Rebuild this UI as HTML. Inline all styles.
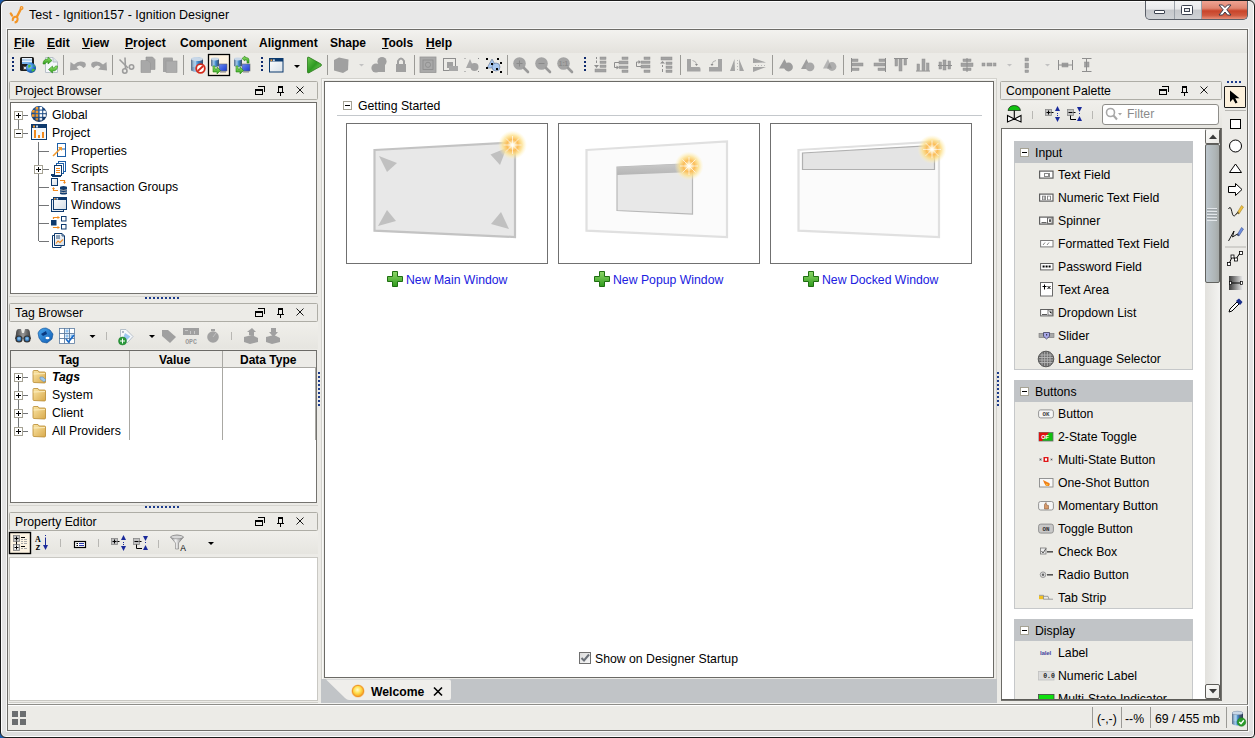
<!DOCTYPE html>
<html><head><meta charset="utf-8">
<style>
*{margin:0;padding:0;box-sizing:border-box}
html,body{width:1255px;height:738px;overflow:hidden;background:linear-gradient(90deg,#1d5aa8 0,#1d5aa8 50%,#d8d8d8 50%)}
body{font-family:"Liberation Sans",sans-serif;font-size:12.25px;color:#000;position:relative}
.a{position:absolute}
.t{position:absolute;white-space:nowrap;line-height:14px}
#win{position:absolute;left:0;top:0;width:1255px;height:738px;background:linear-gradient(#e8e8e8 0,#e8e8e8 28px,#e4e4e4 28px,#e4e4e4 730px,#dddddd 730px);border:1px solid #1a1a1a;border-radius:6px 6px 4px 6px;box-shadow:inset 1px 1px 0 #fdfdfd,inset -1px -1px 0 #fdfdfd}
#inner{position:absolute;left:7px;top:29px;width:1241px;height:702px;background:#ecebe7;border:1px solid #6e6d69;box-shadow:0 0 0 1px #f6f6f6}
.menu{position:absolute;top:36px;font-weight:bold;font-size:12px;line-height:14px;white-space:nowrap}
.menu u{text-decoration:underline;text-underline-offset:1px}
.sep{position:absolute;width:1px;background:#a4a39f}
.hdr{position:absolute;height:19px;background:#ecebe7;border:1px solid #aeada6;border-radius:1.5px}
.hdr .t{top:2px;left:5px}
.box{position:absolute;background:#fff;border:1px solid #6b6a66;border-right-color:#74736f;border-bottom-color:#74736f}
.exp{position:absolute;width:9px;height:9px;border:1px solid #a5a294;background:#fff}
.exp:before{content:"";position:absolute;left:1px;top:3px;width:5px;height:1px;background:#000}
.exp.p:after{content:"";position:absolute;left:3px;top:1px;width:1px;height:5px;background:#000}
.vl{position:absolute;width:1px;background:#737577}
.hl{position:absolute;height:1px;background:#737577}
.dots{position:absolute;height:2px;background:repeating-linear-gradient(90deg,#1d3c8c 0 2px,transparent 2px 4px)}
.vdots{position:absolute;width:2px;background:repeating-linear-gradient(180deg,#1d3c8c 0 2px,transparent 2px 4px)}
.link{position:absolute;top:273px;color:#2020e0;line-height:14px;white-space:nowrap}
.pal{position:absolute;left:1058px;line-height:14px;white-space:nowrap}
.cat{position:absolute;left:1014px;width:179px;height:22px;background:#c1c4c7}
.cat .t{left:21px;top:4px}
.cat .exp{left:6px;top:7px}
.grp{position:absolute;left:1014px;width:179px;background:#ecebe6;border:1px solid #c6c8ca;border-top:0}
svg{position:absolute;overflow:visible}
.hico{position:absolute;top:5px}
</style></head><body>
<div id="win"></div>

<!-- window controls -->
<div class="a" style="left:1145px;top:1px;width:103px;height:19px;border:1px solid #5a5f68;border-top:0;border-radius:0 0 5px 5px;overflow:hidden;background:#9aa0a8">
<div class="a" style="left:0;top:0;width:28px;height:18px;background:linear-gradient(#f4f4f5 0,#e8e9eb 45%,#c6c8cc 50%,#cfd2d6 100%)"></div>
<div class="a" style="left:29px;top:0;width:26px;height:18px;background:linear-gradient(#f4f4f5 0,#e8e9eb 45%,#c6c8cc 50%,#cfd2d6 100%)"></div>
<div class="a" style="left:56px;top:0;width:47px;height:18px;background:linear-gradient(#f0a493 0,#e08570 40%,#c9442a 55%,#d05a40 80%,#e8907a 100%)"></div>
</div>
<div class="a" style="left:1154px;top:10px;width:11px;height:4px;background:#fff;border:1px solid #3c4250;border-radius:1px"></div>
<div class="a" style="left:1181px;top:5px;width:12px;height:10px;border:1.5px solid #3c4250;border-radius:1.5px;background:#fff"></div>
<div class="a" style="left:1184px;top:8px;width:6px;height:4px;border:1px solid #3c4250;background:#e8e9eb"></div>
<svg style="left:1219px;top:5px" width="12" height="10" viewBox="0 0 12 10"><path d="M0 0 L3.5 0 L6 2.6 L8.5 0 L12 0 L7.8 4.8 L12 10 L8.5 10 L6 7 L3.5 10 L0 10 L4.2 4.8Z" fill="#fff" stroke="#3a3a48" stroke-width="1" stroke-linejoin="round"/></svg>
<!-- title icon -->
<svg style="left:9px;top:6px" width="16" height="18" viewBox="0 0 16 18"><path d="M12.5 1.8 L7.8 11" stroke="#f39526" stroke-width="2.4" stroke-linecap="round"/><circle cx="12.6" cy="2" r="1.9" fill="#f39526"/><circle cx="12.6" cy="1.8" r="0.6" fill="#fbe0c0"/><path d="M3.8 15 Q3.3 11.5 6 10.8 Q9 10.5 8.6 13.5 Q8.2 16.2 5.6 16.6" fill="none" stroke="#f39526" stroke-width="2"/><path d="M1.8 7.5 L3 9.5" stroke="#f39526" stroke-width="2.4" stroke-linecap="round"/></svg>
<!-- title -->
<div class="t" style="left:29px;top:7px;font-size:12.5px;line-height:16px">Test - Ignition157 - Ignition Designer</div>
<div id="inner"></div>
<!-- menu bar -->
<div class="a" style="left:8px;top:30px;width:1239px;height:23px;background:linear-gradient(#f3f2ef,#e4e2dd)"></div>
<div class="menu" style="left:14px"><u>F</u>ile</div>
<div class="menu" style="left:47px"><u>E</u>dit</div>
<div class="menu" style="left:82px"><u>V</u>iew</div>
<div class="menu" style="left:125px"><u>P</u>roject</div>
<div class="menu" style="left:180px">Component</div>
<div class="menu" style="left:259px">Alignment</div>
<div class="menu" style="left:330px">Shape</div>
<div class="menu" style="left:382px"><u>T</u>ools</div>
<div class="menu" style="left:426px"><u>H</u>elp</div>
<!-- toolbar -->
<svg style="left:0;top:0" width="1255" height="82" viewBox="0 0 1255 82">
<defs>
<radialGradient id="glb" cx="0.35" cy="0.35" r="0.7"><stop offset="0" stop-color="#8fd0ff"/><stop offset="0.6" stop-color="#2a78d0"/><stop offset="1" stop-color="#124a9a"/></radialGradient>
<linearGradient id="grn" x1="0" y1="0" x2="0" y2="1"><stop offset="0" stop-color="#9be870"/><stop offset="1" stop-color="#2e9c1a"/></linearGradient>
<linearGradient id="play" x1="0" y1="0" x2="1" y2="1"><stop offset="0" stop-color="#6cc850"/><stop offset="0.5" stop-color="#2e9a22"/><stop offset="1" stop-color="#8ee070"/></linearGradient>
<linearGradient id="cyl" x1="0" y1="0" x2="1" y2="0"><stop offset="0" stop-color="#5a6e88"/><stop offset="0.35" stop-color="#9ec8ec"/><stop offset="0.6" stop-color="#3c86c8"/><stop offset="1" stop-color="#3a4a66"/></linearGradient>
<linearGradient id="mon" x1="0" y1="0" x2="1" y2="1"><stop offset="0" stop-color="#6c8cf0"/><stop offset="1" stop-color="#1a3ad0"/></linearGradient>
<linearGradient id="winb" x1="0" y1="0" x2="1" y2="1"><stop offset="0" stop-color="#ffffff"/><stop offset="1" stop-color="#d8e0e8"/></linearGradient>
</defs>
<!-- separators -->
<g fill="#9b9a96">
<rect x="63" y="55" width="1" height="20"/><rect x="112" y="55" width="1" height="20"/><rect x="183" y="55" width="1" height="20"/>
<rect x="327" y="55" width="1" height="20"/><rect x="414" y="55" width="1" height="20"/><rect x="507" y="55" width="1" height="20"/>
<rect x="680" y="55" width="1" height="20"/><rect x="772" y="55" width="1" height="20"/><rect x="843" y="55" width="1" height="20"/>
</g>
<!-- grips -->
<g fill="#0e2a6e">
<rect x="12" y="57" width="2" height="2"/><rect x="12" y="61" width="2" height="2"/><rect x="12" y="65" width="2" height="2"/><rect x="12" y="69" width="2" height="2"/>
<rect x="261" y="57" width="2" height="2"/><rect x="261" y="61" width="2" height="2"/><rect x="261" y="65" width="2" height="2"/><rect x="261" y="69" width="2" height="2"/>
<rect x="584" y="57" width="2" height="2"/><rect x="584" y="61" width="2" height="2"/><rect x="584" y="65" width="2" height="2"/><rect x="584" y="69" width="2" height="2"/>
</g>
<!-- save -->
<rect x="20" y="57" width="14" height="14" rx="1.5" fill="#1e1e1e"/>
<rect x="22" y="58" width="10" height="6" fill="#e8f2fb"/><rect x="22" y="59" width="10" height="2" fill="#b8d4ee"/><rect x="22" y="62" width="10" height="2" fill="#78b4ea"/>
<rect x="23" y="66" width="6" height="4" fill="#505050"/><rect x="24" y="67" width="2" height="2" fill="#ddd"/>
<circle cx="31" cy="68" r="5" fill="url(#glb)"/>
<path d="M28 65.5 Q30 64 31 66 Q30 68 28.5 68 Z M32 69 Q34 68 35 70 Q33 72 31.5 71.5Z M33 64.5 Q35 65 35.5 67 L34 66.5Z" fill="#4cbb3a"/>
<!-- refresh -->
<path d="M45.5 57.5 L53 57.5 L57.5 62 L57.5 72.5 L45.5 72.5Z" fill="#f4f7fa" stroke="#b8c0c8"/>
<path d="M53 57.5 L53 62 L57.5 62" fill="#dde3ea" stroke="#b8c0c8"/>
<path d="M43 64 Q43 59 48 59 L48 57 L52 60.5 L48 64 L48 62 Q45.5 62 45 64Z" fill="url(#grn)" stroke="#2a8a1a" stroke-width="0.6"/>
<path d="M57.5 66 Q57.5 71 52.5 71 L52.5 73 L48.5 69.5 L52.5 66 L52.5 68 Q55 68 55.5 66Z" fill="url(#grn)" stroke="#2a8a1a" stroke-width="0.6"/>
<!-- undo/redo -->
<path d="M70 70.5 L70.5 62 L74 64.5 Q79 59.5 85 62.5 Q86.5 64 85.5 66.5 L83.5 68 Q80 63.5 76.5 67 L79 69.5Z" fill="#a2a2a2"/>
<path d="M107 70.5 L106.5 62 L103 64.5 Q98 59.5 92 62.5 Q90.5 64 91.5 66.5 L93.5 68 Q97 63.5 100.5 67 L98 69.5Z" fill="#a2a2a2"/>
<!-- cut -->
<g stroke="#9c9c9c" fill="none" stroke-width="1.6"><path d="M119.5 59.5 L128 68"/><path d="M125 57.5 L125.5 69"/><circle cx="124.8" cy="71" r="2.2"/><circle cx="131.5" cy="67" r="2.2"/></g>
<!-- copy -->
<path d="M146 57 L152.5 57 L155 59.5 L155 69.5 L146 69.5Z" fill="#a4a4a4" stroke="#959595" stroke-width="0.6"/>
<path d="M141 60.5 L148 60.5 L150.5 63 L150.5 72.5 L141 72.5Z" fill="#a8a8a8" stroke="#959595" stroke-width="0.6"/>
<!-- paste -->
<path d="M163 58.5 Q163 57.5 164 57.5 L172 57.5 Q173 57.5 173 58.5 L173 72 L163 72Z" fill="#a4a4a4"/>
<rect x="166" y="61" width="11" height="11.5" fill="#acacac" stroke="#989898" stroke-width="0.6"/>
<!-- db no -->
<path d="M191 59 Q197 55.5 203 59 L203 70.5 Q197 74 191 70.5Z" fill="url(#cyl)"/>
<ellipse cx="197" cy="59" rx="6" ry="2" fill="#c9d8e8"/>
<g stroke="#d0e8f8" stroke-width="0.7"><line x1="192.5" y1="62" x2="196" y2="62"/><line x1="192.5" y1="64" x2="196" y2="64"/><line x1="192.5" y1="66" x2="196" y2="66"/></g>
<circle cx="200.5" cy="68.5" r="4.3" fill="#fff" stroke="#d42a1a" stroke-width="1.8"/>
<line x1="197.8" y1="71" x2="203.2" y2="66" stroke="#d42a1a" stroke-width="1.8"/>
<!-- selected button -->
<rect x="208.5" y="54.5" width="21" height="21" fill="#fdf3e2" stroke="#000" stroke-width="1.3"/>
<path d="M211 59 Q215 57 219 59 L219 66 Q215 68 211 66Z" fill="url(#cyl)"/>
<ellipse cx="215" cy="59" rx="4" ry="1.4" fill="#c9d8e8"/>
<rect x="219" y="64" width="8" height="7" fill="url(#mon)" stroke="#6a6a6a" stroke-width="0.6"/><rect x="220" y="71" width="6" height="1.6" fill="#9a9a9a"/>
<path d="M213 66 L215 66 L215 69 L217 69 L217 67 L220.5 70.5 L217 74 L217 72 L213 72Z" fill="url(#grn)" stroke="#2a8a1a" stroke-width="0.6"/>
<!-- db sync -->
<path d="M234 59 Q238 57 242 59 L242 66 Q238 68 234 66Z" fill="url(#cyl)"/>
<ellipse cx="238" cy="59" rx="4" ry="1.4" fill="#c9d8e8"/>
<rect x="242" y="64" width="8" height="7" fill="url(#mon)" stroke="#6a6a6a" stroke-width="0.6"/><rect x="243" y="71" width="6" height="1.6" fill="#9a9a9a"/>
<path d="M236 66 L238 66 L238 69 L240 69 L240 67 L243.5 70.5 L240 74 L240 72 L236 72Z" fill="url(#grn)" stroke="#2a8a1a" stroke-width="0.6"/>
<path d="M249 63 L249 60 Q249 57.5 246 57.5 L245 57.5 L245 56 L242 58.5 L245 61 L245 59.5 Q247 59.5 247 61 L247 63Z" fill="url(#grn)" stroke="#2a8a1a" stroke-width="0.6"/>
<!-- window -->
<rect x="269.5" y="58.5" width="13.5" height="13.5" fill="url(#winb)" stroke="#0c3a6e"/>
<rect x="270" y="59" width="13" height="2.5" fill="#0c3a6e"/>
<rect x="270.5" y="59.4" width="1.8" height="1.8" fill="#f0a040"/><rect x="273" y="59.4" width="1.8" height="1.8" fill="#c8d8ea"/>
<path d="M294 65 L300 65 L297 68Z" fill="#000"/>
<!-- play -->
<path d="M307.5 58 Q307.5 56.5 309 57.3 L321 64 Q322 65 321 66 L309 72.8 Q307.5 73.5 307.5 72Z" fill="url(#play)" stroke="#2a7a1a" stroke-width="0.8"/>
<!-- gray group 1 -->
<g fill="#a0a0a0">
<path d="M334 60 L339 57.5 L348.5 59.5 L348 70 L343 73 L334 70.5Z"/>
<path d="M359 64 L364 64 L361.5 66.5Z" fill="#c2c2c2"/>
<circle cx="376" cy="68" r="4.6"/><circle cx="382" cy="61.5" r="4.6"/><rect x="377" y="64" width="8" height="8"/>
<path d="M396 64 L406 64 L406 72 L396 72Z"/><path d="M398 64 L398 61 Q401 56 404 61 L404 64" fill="none" stroke="#a0a0a0" stroke-width="2"/>
<rect x="420" y="57" width="16" height="15.5" fill="#a9a9a9" stroke="#969696" stroke-width="0.8"/>
</g>
<g stroke="#8c8c8c" fill="none" stroke-width="0.8"><rect x="423" y="60" width="10" height="9.5"/><circle cx="428" cy="64.8" r="2.6"/></g>
<g fill="none" stroke="#8e8e8e" stroke-width="1"><rect x="443.5" y="58.5" width="12" height="12"/></g>
<rect x="447" y="62" width="6" height="6" fill="#a0a0a0"/><rect x="449" y="66" width="9" height="5" fill="#a8a8a8"/>
<path d="M466 68 L470 59 L474 68Z" fill="#a8a8a8"/><circle cx="474.5" cy="67" r="4" fill="#a2a2a2"/>
<g fill="#888"><rect x="464.5" y="58" width="1" height="1"/><rect x="478" y="58" width="1" height="1"/><rect x="464.5" y="71" width="1" height="1"/><rect x="478" y="71" width="1" height="1"/></g>
<path d="M487 68 L492 59 L497 68Z" fill="#a8c8f0" stroke="#506080" stroke-width="0.5"/><circle cx="496" cy="67" r="4" fill="#a8c8f0" stroke="#506080" stroke-width="0.5"/>
<g fill="#000"><rect x="486" y="58" width="2" height="2"/><rect x="497" y="58" width="2" height="2"/><rect x="500" y="62" width="2" height="2"/><rect x="486" y="67" width="2" height="2"/><rect x="491" y="63" width="2" height="2"/><rect x="496" y="68" width="2" height="2"/><rect x="491" y="71" width="2" height="2"/><rect x="500" y="71" width="2" height="2"/></g>
<!-- zoom -->
<g fill="#a4a4a4"><circle cx="519.5" cy="63.5" r="6.3"/><circle cx="541.5" cy="63.5" r="6.3"/><circle cx="563.5" cy="63.5" r="6.3"/></g>
<g stroke="#9a9a9a" stroke-width="2.6" stroke-linecap="round"><line x1="524" y1="68" x2="528" y2="72"/><line x1="546" y1="68" x2="550" y2="72"/><line x1="568" y1="68" x2="572" y2="72"/></g>
<g stroke="#8a8a8a" stroke-width="1"><path d="M516.5 63.5 L522.5 63.5 M519.5 60.5 L519.5 66.5"/><path d="M538.5 63.5 L544.5 63.5"/></g>
<text x="563.5" y="66.2" font-size="6.5" font-weight="bold" text-anchor="middle" fill="#8a8a8a" font-family="Liberation Sans">1:1</text>
<!-- list icons -->
<g fill="#a2a2a2" stroke="#8e8e8e" stroke-width="0.5">
<rect x="600" y="57" width="6" height="2.4"/><rect x="600" y="61" width="6" height="2.4"/><rect x="600" y="65" width="6" height="2.4"/><rect x="595" y="69" width="11" height="3"/>
<rect x="622" y="57" width="6" height="2.4"/><rect x="619" y="61" width="9" height="3"/><rect x="619" y="66" width="9" height="2.4"/><rect x="622" y="70" width="6" height="2.4"/>
<rect x="644" y="57" width="6" height="2.4"/><rect x="641" y="61" width="9" height="2.4"/><rect x="641" y="65" width="9" height="3"/><rect x="644" y="70" width="6" height="2.4"/>
<rect x="661" y="57" width="11" height="3"/><rect x="666" y="62" width="6" height="2.4"/><rect x="666" y="66" width="6" height="2.4"/><rect x="666" y="70" width="6" height="2.4"/>
</g>
<g stroke="#8e8e8e" fill="none" stroke-width="1">
<path d="M596.5 57 L596.5 59 M596.5 60.5 L596.5 63"/><path d="M619 62.5 L614.5 62.5 L614.5 67.5 L617.5 67.5"/><path d="M641 66.5 L636.5 66.5 L636.5 62 L639 62"/><path d="M662.5 65 L662.5 67 M662.5 69 L662.5 72"/>
</g>
<g fill="#8e8e8e"><path d="M594 65 L599 65 L596.5 68Z"/><path d="M616.5 65.5 L619 67.5 L616.5 69.5Z"/><path d="M638.5 60 L641 62 L638.5 64Z"/><path d="M660 63.5 L665 63.5 L662.5 61Z"/></g>
<!-- rotate / flip -->
<g fill="#a4a4a4">
<path d="M687 59 L691 59 L691 67 L699 67 Q700.5 67 700.5 69 L700.5 71.5 L687 71.5Z"/>
<path d="M722 59 L718 59 L718 67 L709 67 L709 71.5 L722 71.5Z"/>
<path d="M730 71 L734.5 59 L735 71Z"/><path d="M739 59 L739.5 71 L744 71Z"/>
<path d="M753 58 L766 62.5 L753 63Z"/><path d="M753 67 L766 67 L753 72Z"/>
</g>
<g fill="none" stroke="#9a9a9a" stroke-width="0.7"><path d="M692.5 60.5 Q696 61 696.5 64"/><path d="M716 60.5 Q712.5 61 712 64"/></g>
<g fill="#888"><path d="M695 64 L698 64 L696.5 66Z"/><path d="M710.5 64 L713.5 64 L712 66Z"/></g>
<g fill="#b8b8b8"><rect x="737" y="60" width="1" height="1"/><rect x="737" y="63" width="1" height="1"/><rect x="737" y="66" width="1" height="1"/><rect x="737" y="69" width="1" height="1"/><rect x="755" y="65" width="1" height="1"/><rect x="758" y="65" width="1" height="1"/><rect x="761" y="65" width="1" height="1"/><rect x="764" y="65" width="1" height="1"/></g>
<!-- boolean shapes -->
<g fill="#9c9c9c"><path d="M779 68.5 L784.5 59 L788 66 L788 68.5Z"/><circle cx="788.5" cy="67" r="4.4"/></g>
<g fill="#9e9e9e"><path d="M801 69 L806.5 59 L811 69Z"/></g><circle cx="810" cy="66.8" r="4.4" fill="#a8a8a8"/>
<g fill="#a6a6a6" opacity="0.9"><path d="M823 68.5 L828 59 L832 68.5Z" fill="#b0b0b0"/><circle cx="832" cy="66.5" r="4.4" fill="#a8a8a8"/><path d="M827 68.5 L829.5 63 L832 68.5Z" fill="#909090"/></g>
<!-- align -->
<g fill="#a2a2a2" stroke="#8e8e8e" stroke-width="0.5">
<rect x="852" y="59" width="6" height="2.5"/><rect x="852" y="63" width="11" height="3"/><rect x="852" y="68" width="7" height="2.5"/>
<rect x="879" y="59" width="6" height="2.5"/><rect x="874" y="63" width="11" height="3"/><rect x="878" y="68" width="7" height="2.5"/>
<rect x="895" y="59" width="2.5" height="7"/><rect x="899" y="59" width="3" height="12"/><rect x="904" y="59" width="2.5" height="6"/>
<rect x="917" y="64" width="2.5" height="6.5"/><rect x="922" y="59" width="3" height="11.5"/><rect x="926.5" y="63" width="2.5" height="7.5"/>
<rect x="939" y="62" width="2.5" height="7"/><rect x="943" y="60" width="3" height="10"/><rect x="948" y="61" width="2.5" height="8"/>
<rect x="963" y="59" width="8" height="2.5"/><rect x="961" y="63" width="12" height="3.5"/><rect x="963" y="68" width="8" height="2.5"/>
<rect x="982" y="63" width="3" height="3"/><rect x="987" y="63" width="5" height="3"/><rect x="993.5" y="63" width="2.5" height="3"/>
<rect x="1025" y="58" width="3.5" height="3"/><rect x="1025" y="63" width="3.5" height="5"/><rect x="1025" y="70" width="3.5" height="2.5"/>
<rect x="1062" y="63" width="6" height="4"/><rect x="1084.5" y="62" width="4.5" height="5"/>
</g>
<g stroke="#8e8e8e" stroke-width="1">
<path d="M851.5 58 L851.5 72"/><path d="M885.5 58 L885.5 72"/><path d="M894 58.5 L908 58.5"/><path d="M916 71 L930 71"/><path d="M938 65.5 L952 65.5"/><path d="M967 58 L967 72"/>
<path d="M1058.5 60 L1058.5 70 M1072.5 60 L1072.5 70 M1059 65 L1072 65"/><path d="M1082 58.5 L1091.5 58.5 M1082 71.5 L1091.5 71.5 M1086.5 59 L1086.5 71"/>
</g>
<g fill="#c2c2c2"><path d="M1007 64 L1012 64 L1009.5 66.5Z"/><path d="M1045 64 L1050 64 L1047.5 66.5Z"/></g>
</svg>


<!-- LEFT: project browser -->
<div class="hdr" style="left:9px;top:81px;width:309px"><div class="t">Project Browser</div></div>
<div class="box" style="left:10px;top:102px;width:307px;height:192px"></div>

<!-- project tree -->
<div class="exp p" style="left:14px;top:111px"></div>
<div class="hl" style="left:23px;top:115px;width:5px"></div>
<div class="vl" style="left:18px;top:120px;height:9px"></div>
<div class="exp" style="left:14px;top:129px"></div>
<div class="hl" style="left:23px;top:133px;width:5px"></div>
<div class="vl" style="left:38px;top:142px;height:99px"></div>
<div class="hl" style="left:39px;top:151px;width:10px"></div>
<div class="exp p" style="left:34px;top:165px"></div>
<div class="hl" style="left:43px;top:169px;width:6px"></div>
<div class="hl" style="left:39px;top:187px;width:10px"></div>
<div class="hl" style="left:39px;top:205px;width:10px"></div>
<div class="hl" style="left:39px;top:223px;width:10px"></div>
<div class="hl" style="left:39px;top:241px;width:10px"></div>
<svg style="left:31px;top:106px" width="16" height="16" viewBox="0 0 16 16"><defs><clipPath id="gc"><circle cx="8" cy="8" r="7.6"/></clipPath><radialGradient id="gg" cx="0.4" cy="0.35" r="0.75"><stop offset="0" stop-color="#2a68b0"/><stop offset="1" stop-color="#0a2a58"/></radialGradient></defs><circle cx="8" cy="8" r="7.9" fill="url(#gg)"/><g clip-path="url(#gc)"><g fill="#f39a2c"><rect x="1" y="4" width="2.6" height="2.6"/><rect x="4.6" y="1" width="2.6" height="2.6"/><rect x="4.6" y="4.6" width="2.6" height="2.6"/><rect x="1" y="8.2" width="2.6" height="2.6"/><rect x="4.6" y="8.2" width="2.6" height="2.6"/><rect x="4.6" y="11.8" width="2.6" height="2.6" opacity="0.8"/></g><g fill="#fff"><rect x="8.6" y="1" width="2.6" height="2.6"/><rect x="8.6" y="4.6" width="2.6" height="2.6"/><rect x="12.2" y="4.6" width="2.6" height="2.6"/><rect x="8.6" y="8.2" width="2.6" height="2.6"/><rect x="12.2" y="8.2" width="2.6" height="2.6"/><rect x="8.6" y="11.8" width="2.6" height="2.6" opacity="0.85"/></g></g></svg>
<div class="t" style="left:52px;top:108px">Global</div>
<svg style="left:31px;top:124px" width="16" height="16" viewBox="0 0 16 16"><rect x="0.5" y="0.5" width="15" height="15" fill="#f4f8fc" stroke="#0e3a6e"/><rect x="1" y="1" width="14" height="3" fill="#0e3a6e"/><rect x="2" y="1.5" width="2" height="2" fill="#f39a2c"/><rect x="5" y="1.5" width="2" height="2" fill="#c8d8ea"/><rect x="3" y="6" width="2" height="8" fill="#f28a1e"/><rect x="7" y="11" width="2" height="3" fill="#f28a1e"/><rect x="11" y="8" width="2" height="6" fill="#f28a1e"/></svg>
<div class="t" style="left:52px;top:126px">Project</div>
<svg style="left:51px;top:143px" width="16" height="16" viewBox="0 0 16 16"><rect x="6.5" y="0.5" width="8" height="13" fill="#fff" stroke="#1c5fa8"/><line x1="8" y1="6" x2="14" y2="6" stroke="#1c5fa8"/><path d="M2 13 L10 5" stroke="#f39a2c" stroke-width="1.6"/><path d="M7 4 L11 4 L11 8 Z" fill="#f39a2c"/></svg>
<div class="t" style="left:71px;top:144px">Properties</div>
<svg style="left:51px;top:160px" width="16" height="17" viewBox="0 0 16 17" shape-rendering="crispEdges"><rect x="7.5" y="1.5" width="7" height="10" fill="#fff" stroke="#1c5fa8"/><rect x="5.5" y="3.5" width="7" height="10" fill="#fff" stroke="#1c5fa8"/><rect x="3.5" y="5.5" width="7" height="10" fill="#fff" stroke="#0e3a6e"/><g fill="#f28a1e"><rect x="5" y="8" width="4" height="1"/><rect x="5" y="10" width="4" height="1"/><rect x="5" y="12" width="4" height="1"/></g><path d="M0 14 L3 14 L3 15 L10 15 L10 17 L1 17 L0 16Z" fill="#0e3a6e"/></svg>
<div class="t" style="left:71px;top:162px">Scripts</div>
<svg style="left:0;top:0" width="80" height="260" viewBox="0 0 80 260">
<defs><linearGradient id="wg" x1="0" y1="0" x2="1" y2="1"><stop offset="0" stop-color="#ffffff"/><stop offset="1" stop-color="#d4dde6"/></linearGradient></defs>
<rect x="51.5" y="178.5" width="6" height="7" fill="url(#wg)" stroke="#0e3a6e"/>
<path d="M60 180.5 L64.5 180.5 L64.5 182.5" fill="none" stroke="#f28a1e" stroke-width="1.2"/><path d="M63 182 L66 182 L64.5 184Z" fill="#f28a1e"/>
<path d="M58 190.5 L53.5 190.5 L53.5 188.5" fill="none" stroke="#f28a1e" stroke-width="1.2"/><path d="M52 189 L55 189 L53.5 187Z" fill="#f28a1e"/>
<g fill="#0e3a6e"><ellipse cx="63.5" cy="187.5" rx="3.5" ry="1.5"/><rect x="60" y="187.5" width="7" height="6"/><ellipse cx="63.5" cy="193.5" rx="3.5" ry="1"/></g>
<g stroke="#fff" stroke-width="0.7"><path d="M60 189.8 Q63.5 191 67 189.8"/><path d="M60 192 Q63.5 193.2 67 192"/></g>
<rect x="51.5" y="199.5" width="12" height="12" fill="#e8eef4" stroke="#0e3a6e"/>
<rect x="53.5" y="197.5" width="13" height="12" fill="url(#wg)" stroke="#0e3a6e"/>
<rect x="53" y="197" width="14" height="3" fill="#0e3a6e"/>
<rect x="54" y="198" width="1.6" height="1.6" fill="#e89a40"/><rect x="56.5" y="198" width="1.6" height="1.6" fill="#c8d8ea"/>
<rect x="51" y="220" width="5.5" height="5.5" fill="#0e3a6e"/>
<rect x="61.5" y="216.5" width="4.5" height="4.5" fill="#fff" stroke="#0e3a6e"/>
<rect x="61.5" y="224.5" width="4.5" height="4.5" fill="#fff" stroke="#0e3a6e"/>
<path d="M53.5 219 L53.5 217.5 L58 217.5" fill="none" stroke="#f28a1e" stroke-width="1.2"/><path d="M57.5 216 L60 217.5 L57.5 219Z" fill="#f28a1e"/>
<path d="M53.5 227 L53.5 227.5 L58 227.5" fill="none" stroke="#f28a1e" stroke-width="1.2"/><path d="M57.5 226 L60 227.5 L57.5 229Z" fill="#f28a1e"/>
<path d="M52.5 235.5 L61 235.5 L61 247.5 L52.5 247.5Z" fill="#fff" stroke="#0e3a6e"/>
<path d="M54.5 233.5 L62 233.5 L64.5 236 L64.5 245.5 L54.5 245.5Z" fill="url(#wg)" stroke="#0e3a6e"/>
<path d="M62 233.5 L62 236 L64.5 236" fill="none" stroke="#0e3a6e" stroke-width="0.8"/>
<g stroke="#0e3a6e" stroke-width="0.9"><path d="M56 236 L60 236"/><path d="M56 238 L60 238"/></g>
<path d="M56 243.5 L58 241 L60 242.5 L63 239.5" fill="none" stroke="#f28a1e" stroke-width="1.1"/>
</svg>
<div class="t" style="left:71px;top:180px">Transaction Groups</div>
<div class="t" style="left:71px;top:198px">Windows</div>
<div class="t" style="left:71px;top:216px">Templates</div>
<div class="t" style="left:71px;top:234px">Reports</div>
<div class="a" style="left:9px;top:296px;width:309px;height:1px;background:#d6d5d0"></div>
<div class="dots" style="left:145px;top:297px;width:35px"></div>

<!-- tag browser -->
<div class="hdr" style="left:9px;top:303px;width:309px"><div class="t">Tag Browser</div></div>
<div class="a" style="left:9px;top:322px;width:309px;height:27px;background:linear-gradient(#f0efeb,#e6e5e0)"></div>
<div class="box" style="left:10px;top:350px;width:307px;height:153px"></div>
<div class="a" style="left:11px;top:351px;width:305px;height:17px;background:#ecebe7;border-bottom:1px solid #a9a8a3"></div>
<div class="vl" style="left:129px;top:351px;height:89px;background:#a9a8a3"></div>
<div class="vl" style="left:222px;top:351px;height:89px;background:#a9a8a3"></div>
<div class="vl" style="left:315px;top:368px;height:72px;background:#a9a8a3"></div>
<div class="t" style="left:59px;top:353px;font-weight:bold;font-size:12px">Tag</div>
<div class="t" style="left:159px;top:353px;font-weight:bold;font-size:12px">Value</div>
<div class="t" style="left:240px;top:353px;font-weight:bold;font-size:12px">Data Type</div>

<!-- tag tree -->
<div class="vl" style="left:18px;top:382px;height:46px"></div>
<div class="exp p" style="left:14px;top:373px"></div><div class="hl" style="left:23px;top:377px;width:5px"></div>
<svg style="left:32px;top:369px" width="15" height="15" viewBox="0 0 15 15"><defs><linearGradient id="fg377" x1="0" y1="0" x2="1" y2="1"><stop offset="0" stop-color="#fbe7a8"/><stop offset="1" stop-color="#d9a94a"/></linearGradient></defs><path d="M1 2.5 Q1 1.5 2 1.5 L6 1.5 L7 3 L12.5 3 Q13.5 3 13.5 4 L13.5 13 Q13.5 14 12.5 14 L2 13.5 Q1 13.5 1 12.5Z" fill="url(#fg377)" stroke="#b8892f" stroke-width="0.8"/><path d="M1.5 5 L13 4.5" stroke="#fff4cc" stroke-width="0.8"/><path d="M8 8 L11 8 L14 11 L12 13 L8 10Z" fill="#9cc8ef" stroke="#6a8fb0" stroke-width="0.6"/></svg>
<div class="t" style="left:52px;top:370px;font-weight:bold;font-style:italic;">Tags</div>
<div class="exp p" style="left:14px;top:391px"></div><div class="hl" style="left:23px;top:395px;width:5px"></div>
<svg style="left:32px;top:387px" width="15" height="15" viewBox="0 0 15 15"><defs><linearGradient id="fg395" x1="0" y1="0" x2="1" y2="1"><stop offset="0" stop-color="#fbe7a8"/><stop offset="1" stop-color="#d9a94a"/></linearGradient></defs><path d="M1 2.5 Q1 1.5 2 1.5 L6 1.5 L7 3 L12.5 3 Q13.5 3 13.5 4 L13.5 13 Q13.5 14 12.5 14 L2 13.5 Q1 13.5 1 12.5Z" fill="url(#fg395)" stroke="#b8892f" stroke-width="0.8"/><path d="M1.5 5 L13 4.5" stroke="#fff4cc" stroke-width="0.8"/></svg>
<div class="t" style="left:52px;top:388px;">System</div>
<div class="exp p" style="left:14px;top:409px"></div><div class="hl" style="left:23px;top:413px;width:5px"></div>
<svg style="left:32px;top:405px" width="15" height="15" viewBox="0 0 15 15"><defs><linearGradient id="fg413" x1="0" y1="0" x2="1" y2="1"><stop offset="0" stop-color="#fbe7a8"/><stop offset="1" stop-color="#d9a94a"/></linearGradient></defs><path d="M1 2.5 Q1 1.5 2 1.5 L6 1.5 L7 3 L12.5 3 Q13.5 3 13.5 4 L13.5 13 Q13.5 14 12.5 14 L2 13.5 Q1 13.5 1 12.5Z" fill="url(#fg413)" stroke="#b8892f" stroke-width="0.8"/><path d="M1.5 5 L13 4.5" stroke="#fff4cc" stroke-width="0.8"/></svg>
<div class="t" style="left:52px;top:406px;">Client</div>
<div class="exp p" style="left:14px;top:427px"></div><div class="hl" style="left:23px;top:431px;width:5px"></div>
<svg style="left:32px;top:423px" width="15" height="15" viewBox="0 0 15 15"><defs><linearGradient id="fg431" x1="0" y1="0" x2="1" y2="1"><stop offset="0" stop-color="#fbe7a8"/><stop offset="1" stop-color="#d9a94a"/></linearGradient></defs><path d="M1 2.5 Q1 1.5 2 1.5 L6 1.5 L7 3 L12.5 3 Q13.5 3 13.5 4 L13.5 13 Q13.5 14 12.5 14 L2 13.5 Q1 13.5 1 12.5Z" fill="url(#fg431)" stroke="#b8892f" stroke-width="0.8"/><path d="M1.5 5 L13 4.5" stroke="#fff4cc" stroke-width="0.8"/></svg>
<div class="t" style="left:52px;top:424px;">All Providers</div>
<div class="a" style="left:9px;top:505px;width:309px;height:1px;background:#d6d5d0"></div>
<div class="dots" style="left:145px;top:506px;width:35px"></div>

<!-- property editor -->
<div class="hdr" style="left:9px;top:512px;width:309px"><div class="t">Property Editor</div></div>
<div class="a" style="left:9px;top:531px;width:309px;height:23px;background:linear-gradient(#f0efeb,#e6e5e0)"></div>
<div class="a" style="left:9px;top:557px;width:309px;height:144px;background:#fff;border:1px solid #c9c8c3"></div>
<div class="a" style="left:9px;top:702px;width:309px;height:1px;background:#d0cfca"></div>

<!-- center -->
<div class="a" style="left:321px;top:78px;width:676px;height:626px;border:1px solid #d3d2cd;border-bottom:0;box-shadow:inset 1px 1px 0 #f8f8f6"></div>
<div class="box" style="left:324px;top:81px;width:670px;height:597px;border-color:#6b6a66"></div>
<div class="exp" style="left:343px;top:101px"></div>
<div class="t" style="left:358px;top:99px">Getting Started</div>
<div class="a" style="left:337px;top:115px;width:645px;height:1px;background:#c4c8cc"></div>
<div class="a" style="left:346px;top:123px;width:202px;height:141px;border:1px solid #707070"></div>
<div class="a" style="left:558px;top:123px;width:202px;height:141px;border:1px solid #707070"></div>
<div class="a" style="left:770px;top:123px;width:202px;height:141px;border:1px solid #707070"></div>

<!-- card drawings -->
<svg style="left:0;top:0" width="1" height="1"><defs>
<radialGradient id="sun"><stop offset="0" stop-color="#ffffff"/><stop offset="0.12" stop-color="#fff2cc"/><stop offset="0.38" stop-color="#fbbc58"/><stop offset="0.66" stop-color="#fde08c" stop-opacity="0.8"/><stop offset="1" stop-color="#fff4c0" stop-opacity="0"/></radialGradient>
</defs></svg>
<svg style="left:346px;top:123px" width="202" height="141" viewBox="0 0 202 141">
<path d="M28.5 27 L169 19.3 L169 114 L28.5 107.7Z" fill="#e8e8e8" stroke="#c3c3c3" stroke-width="2.2"/>
<path d="M33 33 L51 40 L41 49Z" fill="#c0c0c0"/>
<path d="M160.5 25 L144.5 31.5 L154 42Z" fill="#c0c0c0"/>
<path d="M32 103 L50 98 L41 87Z" fill="#c0c0c0"/>
<path d="M163 106 L145 101 L155 89Z" fill="#c0c0c0"/>
<circle cx="166.5" cy="22" r="14.5" fill="url(#sun)"/>
<path d="M166.5 13 L166.5 31 M157.5 22 L175.5 22 M160 15.5 L173 28.5 M173 15.5 L160 28.5" stroke="#fff" stroke-width="0.9" opacity="0.75"/>
</svg>
<svg style="left:558px;top:123px" width="202" height="141" viewBox="0 0 202 141">
<path d="M28.5 27 L169 18.5 L169 114 L28.5 107.7Z" fill="#fbfbfb" stroke="#e0e0e0" stroke-width="2.2"/>
<defs><linearGradient id="pt" x1="0" y1="0" x2="0" y2="1"><stop offset="0" stop-color="#c8c8c8"/><stop offset="1" stop-color="#b5b5b5"/></linearGradient></defs>
<path d="M59 44 L134.5 40.6 L134.5 91 L59 87.5Z" fill="#e8e8e8" stroke="#b8b8b8" stroke-width="1.2"/>
<path d="M59 44 L134.5 40.6 L134.5 49 L59 52Z" fill="url(#pt)"/>
<circle cx="131" cy="43" r="14.5" fill="url(#sun)"/>
<path d="M131 34 L131 52 M122 43 L140 43 M124.5 36.5 L137.5 49.5 M137.5 36.5 L124.5 49.5" stroke="#fff" stroke-width="0.9" opacity="0.75"/>
</svg>
<svg style="left:770px;top:123px" width="202" height="141" viewBox="0 0 202 141">
<path d="M28.5 27 L169 18.5 L169 114 L28.5 107.7Z" fill="#fbfbfb" stroke="#e0e0e0" stroke-width="2.2"/>
<path d="M32.5 30 L164.5 22.3 L164.5 46.5 L32.5 46.5Z" fill="#e4e4e4" stroke="#b0b0b0" stroke-width="1.2"/>
<path d="M31 28.5 L166 20.6" stroke="#fff" stroke-width="1"/>
<circle cx="162" cy="26.4" r="14.5" fill="url(#sun)"/>
<path d="M162 17.4 L162 35.4 M153 26.4 L171 26.4 M155.5 19.9 L168.5 32.9 M168.5 19.9 L155.5 32.9" stroke="#fff" stroke-width="0.9" opacity="0.75"/>
</svg>
<svg style="left:387px;top:271px" width="16" height="16" viewBox="0 0 16 16"><defs><linearGradient id="pg387" x1="0" y1="0" x2="0" y2="1"><stop offset="0" stop-color="#8fd86a"/><stop offset="1" stop-color="#2f9a1c"/></linearGradient></defs><path d="M5.5 0.5 L10.5 0.5 L10.5 5.5 L15.5 5.5 L15.5 10.5 L10.5 10.5 L10.5 15.5 L5.5 15.5 L5.5 10.5 L0.5 10.5 L0.5 5.5 L5.5 5.5Z" fill="url(#pg387)" stroke="#1f6e12"/></svg>
<svg style="left:594px;top:271px" width="16" height="16" viewBox="0 0 16 16"><defs><linearGradient id="pg594" x1="0" y1="0" x2="0" y2="1"><stop offset="0" stop-color="#8fd86a"/><stop offset="1" stop-color="#2f9a1c"/></linearGradient></defs><path d="M5.5 0.5 L10.5 0.5 L10.5 5.5 L15.5 5.5 L15.5 10.5 L10.5 10.5 L10.5 15.5 L5.5 15.5 L5.5 10.5 L0.5 10.5 L0.5 5.5 L5.5 5.5Z" fill="url(#pg594)" stroke="#1f6e12"/></svg>
<svg style="left:803px;top:271px" width="16" height="16" viewBox="0 0 16 16"><defs><linearGradient id="pg803" x1="0" y1="0" x2="0" y2="1"><stop offset="0" stop-color="#8fd86a"/><stop offset="1" stop-color="#2f9a1c"/></linearGradient></defs><path d="M5.5 0.5 L10.5 0.5 L10.5 5.5 L15.5 5.5 L15.5 10.5 L10.5 10.5 L10.5 15.5 L5.5 15.5 L5.5 10.5 L0.5 10.5 L0.5 5.5 L5.5 5.5Z" fill="url(#pg803)" stroke="#1f6e12"/></svg>
<div class="link" style="left:406px">New Main Window</div>
<div class="link" style="left:613px">New Popup Window</div>
<div class="link" style="left:822px">New Docked Window</div>
<div class="a" style="left:579px;top:652px;width:12px;height:12px;border:1px solid #6f6f6f;background:linear-gradient(135deg,#dcdcdc,#f6f6f6)"></div>
<svg style="left:580px;top:653px" width="10" height="10" viewBox="0 0 10 10"><path d="M1.5 5 L4 7.5 L9 1.5" stroke="#6a7078" stroke-width="2" fill="none"/></svg>
<div class="t" style="left:595px;top:652px">Show on Designer Startup</div>
<!-- tab strip -->
<div class="a" style="left:321px;top:679px;width:676px;height:24px;background:#c1c4c7"></div>

<svg style="left:321px;top:679px" width="135" height="24" viewBox="0 0 135 24"><path d="M5 0.5 L128 0.5 Q130 0.5 130 2.5 L130 19 Q130 21 128 21 L28 21 Q26 21 24 19 Z" fill="#efeeeb"/></svg>
<svg style="left:351px;top:684px" width="14" height="14" viewBox="0 0 14 14"><defs><radialGradient id="sb" cx="0.45" cy="0.4" r="0.6"><stop offset="0" stop-color="#fffbd0"/><stop offset="0.5" stop-color="#ffe050"/><stop offset="1" stop-color="#f5a020"/></radialGradient></defs><circle cx="7" cy="7" r="6.6" fill="#f7b24a" opacity="0.6"/><circle cx="7" cy="7" r="5.6" fill="url(#sb)" stroke="#f08a18" stroke-width="0.8"/></svg>
<div class="t" style="left:371px;top:685px;font-weight:bold;font-size:12.2px">Welcome</div>
<svg style="left:433px;top:687px" width="10" height="9" viewBox="0 0 10 9"><path d="M1 0.5 L9 8.5 M9 0.5 L1 8.5" stroke="#000" stroke-width="1.6"/></svg>
<div class="a" style="left:8px;top:703px;width:1239px;height:1px;background:#f4f4f2"></div>

<!-- RIGHT palette -->
<div class="hdr" style="left:1000px;top:81px;width:222px"><div class="t">Component Palette</div></div>
<div class="a" style="left:1000px;top:101px;width:222px;height:27px;background:linear-gradient(#f0efeb,#e6e5e0)"></div>
<div class="a" style="left:1102px;top:104px;width:117px;height:21px;background:#fff;border:1px solid #8f8e8a;border-radius:3px"></div>
<div class="t" style="left:1127px;top:107px;color:#8b8b8b">Filter</div>
<div class="box" style="left:1001px;top:128px;width:221px;height:573px"></div>

<div class="a" style="left:1002px;top:129px;width:203px;height:570px;overflow:hidden">
<div class="cat" style="left:12px;top:12px"><div class="exp" style="left:6px;top:7px"></div><div class="t" style="left:21px;top:5px">Input</div></div>
<div class="grp" style="left:12px;top:34px;height:207px"></div>
<div class="pal" style="left:56px;top:39px">Text Field</div>
<div class="pal" style="left:56px;top:62px">Numeric Text Field</div>
<div class="pal" style="left:56px;top:85px">Spinner</div>
<div class="pal" style="left:56px;top:108px">Formatted Text Field</div>
<div class="pal" style="left:56px;top:131px">Password Field</div>
<div class="pal" style="left:56px;top:154px">Text Area</div>
<div class="pal" style="left:56px;top:177px">Dropdown List</div>
<div class="pal" style="left:56px;top:200px">Slider</div>
<div class="pal" style="left:56px;top:223px">Language Selector</div>
<div class="cat" style="left:12px;top:251px"><div class="exp" style="left:6px;top:7px"></div><div class="t" style="left:21px;top:5px">Buttons</div></div>
<div class="grp" style="left:12px;top:273px;height:207px"></div>
<div class="pal" style="left:56px;top:278px">Button</div>
<div class="pal" style="left:56px;top:301px">2-State Toggle</div>
<div class="pal" style="left:56px;top:324px">Multi-State Button</div>
<div class="pal" style="left:56px;top:347px">One-Shot Button</div>
<div class="pal" style="left:56px;top:370px">Momentary Button</div>
<div class="pal" style="left:56px;top:393px">Toggle Button</div>
<div class="pal" style="left:56px;top:416px">Check Box</div>
<div class="pal" style="left:56px;top:439px">Radio Button</div>
<div class="pal" style="left:56px;top:462px">Tab Strip</div>
<div class="cat" style="left:12px;top:490px"><div class="exp" style="left:6px;top:7px"></div><div class="t" style="left:21px;top:5px">Display</div></div>
<div class="grp" style="left:12px;top:512px;height:115px"></div>
<div class="pal" style="left:56px;top:517px">Label</div>
<div class="pal" style="left:56px;top:540px">Numeric Label</div>
<div class="pal" style="left:56px;top:563px">Multi-State Indicator</div>
<div class="pal" style="left:56px;top:586px">LED Display</div>
<div class="pal" style="left:56px;top:609px">Image</div>
<svg style="left:0;top:0" width="203" height="570" viewBox="1002 129 203 570">
<rect x="1039.6" y="171.1" width="13.4" height="7" rx="0" fill="#fff" stroke="#5f5f5f" stroke-width="1.2"/><rect x="1044" y="173.0" width="6" height="4" fill="#888"/><rect x="1045" y="174.0" width="3" height="2" fill="#fff"/><rect x="1039.6" y="194.1" width="13.4" height="7" rx="0" fill="#fff" stroke="#5f5f5f" stroke-width="1.2"/><rect x="1042" y="195.7" width="4" height="4.4" fill="#888"/><rect x="1047" y="195.7" width="4" height="4.4" fill="#888"/><rect x="1043.3" y="196.5" width="1" height="3" fill="#fff"/><rect x="1048" y="196.5" width="2" height="3" fill="#fff"/><rect x="1039.6" y="217.1" width="13.4" height="7" rx="0" fill="#fff" stroke="#5f5f5f" stroke-width="1.2"/><rect x="1047.5" y="217.9" width="4.6" height="5.4" fill="#fff" stroke="#5f5f5f" stroke-width="0.9"/><rect x="1041.5" y="222.1" width="5" height="1" fill="#555"/><rect x="1049" y="219.3" width="2" height="2.6" fill="#555"/><rect x="1040.6" y="240.5" width="12.4" height="6.4" rx="0" fill="#fff" stroke="#7a7a7a" stroke-width="1"/><path d="M1043 245.0 L1045 242.5 M1047 245.0 L1049 242.5" stroke="#777" stroke-width="0.9"/><rect x="1040.6" y="263.5" width="12.4" height="6.4" rx="0" fill="#fff" stroke="#5f5f5f" stroke-width="1"/><rect x="1042.6" y="265.5" width="2" height="2" fill="#000"/><rect x="1045.6" y="265.5" width="2" height="2" fill="#000"/><rect x="1048.6" y="265.5" width="2" height="2" fill="#000"/><rect x="1040.5" y="282.5" width="12" height="13.5" rx="0" fill="#fff" stroke="#6a6a6a" stroke-width="1"/><path d="M1044.5 284.5 L1044.5 289.5 M1042.5 286.5 L1046.5 286.5 M1047.5 286 L1050.5 289 M1050.5 286 L1047.5 289" stroke="#000" stroke-width="1"/><rect x="1040.6" y="309.5" width="12.4" height="6.4" rx="0" fill="#fff" stroke="#5f5f5f" stroke-width="1"/><rect x="1048" y="310.0" width="4.5" height="5" fill="#fff" stroke="#5f5f5f" stroke-width="0.8"/><path d="M1049 311.5 L1051.5 311.5 L1051.5 314.0Z" fill="#000"/><rect x="1042" y="314.0" width="5" height="0.8" fill="#333"/><rect x="1039" y="333.3" width="15" height="4.4" fill="#a8a8a8" stroke="#7a7a7a" stroke-width="0.6"/><path d="M1043.5 332.5 L1049.5 332.5 L1049.5 336.3 L1046.5 339.0 L1043.5 336.3Z" fill="#a8a8e8" stroke="#404060" stroke-width="0.8"/><rect x="1046" y="334.2" width="1.2" height="1.2" fill="#222"/><circle cx="1046" cy="359.0" r="7.8" fill="#6a6a6a"/><path d="M1039 355.0 L1053 355.0" stroke="#b8b8b8" stroke-width="0.9"/><path d="M1039 357.5 L1053 357.5" stroke="#b8b8b8" stroke-width="0.9"/><path d="M1039 360.0 L1053 360.0" stroke="#b8b8b8" stroke-width="0.9"/><path d="M1039 362.5 L1053 362.5" stroke="#b8b8b8" stroke-width="0.9"/><path d="M1042 351.5 L1042 366.5" stroke="#b8b8b8" stroke-width="0.9"/><path d="M1044.7 351.5 L1044.7 366.5" stroke="#b8b8b8" stroke-width="0.9"/><path d="M1047.3 351.5 L1047.3 366.5" stroke="#b8b8b8" stroke-width="0.9"/><path d="M1050 351.5 L1050 366.5" stroke="#b8b8b8" stroke-width="0.9"/><circle cx="1046" cy="359.0" r="7.8" fill="none" stroke="#5a5a5a" stroke-width="1"/><rect x="1038.6" y="409.9" width="14.8" height="8" rx="2" fill="#f6f6f6" stroke="#8a8a8a" stroke-width="0.9"/><text x="1046" y="416.0" font-size="5.8" font-weight="bold" text-anchor="middle" fill="#444" font-family="Liberation Mono">OK</text><rect x="1039" y="432.5" width="14" height="8.5" fill="#10c010" stroke="#6a6a6a" stroke-width="0.8"/><path d="M1039 432.5 L1049 432.5 L1042 441.0 L1039 441.0Z" fill="#e01010"/><text x="1045" y="439.0" font-size="5.5" font-weight="bold" text-anchor="middle" fill="#fff" font-family="Liberation Sans">OF</text><rect x="1039" y="458.0" width="3" height="3" fill="#bbb"/><rect x="1043.5" y="457.0" width="5" height="5" fill="#e01818"/><rect x="1045" y="458.3" width="2" height="2.4" fill="#fff"/><rect x="1050" y="458.0" width="3" height="3" fill="#ccc"/><rect x="1040" y="459.0" width="1" height="1" fill="#555"/><rect x="1051" y="459.0" width="1" height="1" fill="#555"/><rect x="1039.5" y="478.5" width="13.5" height="8.5" fill="#f8f8f8" stroke="#8a8a8a" stroke-width="0.9"/><path d="M1043 480.0 L1048 482.5 Q1051 483.5 1049 486.0 L1046 486.0 Q1044 483.5 1043 480.0Z" fill="#f0801a"/><path d="M1046 483.5 L1048.5 485.0 L1046.5 485.8Z" fill="#ffd040"/><rect x="1038.6" y="501.5" width="14.8" height="8.5" rx="2" fill="#f6f6f6" stroke="#8a8a8a" stroke-width="0.9"/><path d="M1044.5 509.0 L1044.5 504.5 L1046 502.5 L1046.5 505.0 L1048.5 505.5 L1048.5 509.0Z" fill="#d89a6a" stroke="#7a4a2a" stroke-width="0.5"/><rect x="1038.6" y="524.1" width="14.8" height="9" rx="2.2" fill="#c8c8c8" stroke="#8a8a8a" stroke-width="0.9"/><text x="1046" y="530.8" font-size="5.8" font-weight="bold" text-anchor="middle" fill="#333" font-family="Liberation Mono">ON</text><rect x="1040.5" y="548.0" width="5.5" height="6" fill="#eee" stroke="#777" stroke-width="0.8"/><path d="M1041.5 551.0 L1043 553.0 L1046 548.5" stroke="#555" stroke-width="1" fill="none"/><rect x="1047" y="551.0" width="6" height="1.6" fill="#555"/><circle cx="1043" cy="574.7" r="2.8" fill="#ddd" stroke="#888" stroke-width="0.8"/><circle cx="1043" cy="574.7" r="1.2" fill="#666"/><rect x="1047" y="574.0" width="6" height="1.6" fill="#555"/><rect x="1039" y="595.7" width="4.5" height="3.5" fill="#f0c020"/><path d="M1039 595.3 L1043.5 595.3 M1043.5 595.3 L1043.5 599.2 L1053 599.2 M1043.5 596.3 L1048 596.3 L1049 599.2" stroke="#888" stroke-width="0.8" fill="none"/><text x="1045.5" y="654.5" font-size="6.2" font-weight="bold" text-anchor="middle" fill="#4a4aa0" font-family="Liberation Sans" letter-spacing="-0.2">lalel</text><rect x="1038.5" y="671.5" width="15.5" height="8.5" fill="#dcdcdc" stroke="#c0c0c0" stroke-width="0.8"/><text x="1049" y="678.0" font-size="6.5" font-weight="bold" text-anchor="middle" fill="#222" font-family="Liberation Mono">0.0</text><rect x="1038.5" y="694.5" width="15.5" height="9" fill="#10e010" stroke="#444" stroke-width="0.8"/></svg>
</div>

<!-- scrollbar -->
<div class="a" style="left:1205px;top:129px;width:15px;height:570px;background:linear-gradient(90deg,#e2e1dd,#f3f3f1)"></div>
<div class="a" style="left:1205px;top:129px;width:15px;height:15px;background:linear-gradient(135deg,#fbfbfa,#e9e8e4);border:1px solid #5d5c58;border-top-color:#e8e7e3;border-left-color:#6a6965;border-radius:2px"></div>
<svg style="left:1209px;top:134px" width="8" height="5" viewBox="0 0 8 5"><path d="M0 5 L4 0.5 L8 5Z" fill="#3b3b3b"/></svg>
<div class="a" style="left:1205px;top:144px;width:15px;height:139px;background:linear-gradient(90deg,#bcc6cd,#aeb5b6 70%,#a5a9a7);border:1px solid #626360;border-radius:2px"></div>
<div class="a" style="left:1207px;top:208px;width:10px;height:13px;background:repeating-linear-gradient(180deg,#e3e7ea 0 1px,#9ea5a9 1px 2px,transparent 2px 3px)"></div>
<div class="a" style="left:1205px;top:684px;width:15px;height:15px;background:linear-gradient(135deg,#fbfbfa,#e9e8e4);border:1px solid #5d5c58;border-radius:2px"></div>
<svg style="left:1209px;top:689px" width="8" height="5" viewBox="0 0 8 5"><path d="M0 0 L8 0 L4 4.5Z" fill="#3b3b3b"/></svg>
<div class="a" style="left:1220px;top:128px;width:1px;height:572px;background:#5d5c58"></div>
<div class="a" style="left:1001px;top:699px;width:220px;height:1px;background:#5d5c58"></div>

<!-- right tool strip -->
<div class="dots" style="left:1227px;top:81px;width:15px;height:2px"></div>
<div class="a" style="left:1224px;top:86px;width:22px;height:22px;background:#fdf1dc;border:1px solid #1b1b1b;border-radius:1px"></div>
<svg style="left:1229px;top:90px" width="12" height="14" viewBox="0 0 12 14"><path d="M1 0.5 L1 12 L4 9 L6.5 13.5 L8.5 12.5 L6.2 8.2 L10.5 8.2Z" fill="#000"/></svg>
<div class="a" style="left:1225px;top:110px;width:21px;height:1px;background:#b5b4b0"></div>
<svg style="left:1226px;top:115px" width="20" height="200" viewBox="0 0 20 200">
<rect x="4.5" y="4.5" width="10" height="9" fill="#fff" stroke="#000"/>
<circle cx="9.5" cy="31" r="6" fill="#fff" stroke="#000"/>
<path d="M9.5 49 L3.5 57.5 L15.5 57.5Z" fill="#fff" stroke="#000"/>
<path d="M2.5 71.5 L9.5 71.5 L9.5 68.5 L16 74.5 L9.5 80.5 L9.5 77.5 L2.5 77.5Z" fill="#fff" stroke="#000"/>
<path d="M2.5 94 Q4.5 90 5.8 96.5 Q7 103 9.5 100 L11.5 97.5" fill="none" stroke="#000" stroke-width="0.9"/>
<path d="M11 98 L15.5 90.5 L17.5 92 L13 99Z" fill="#f0c040" stroke="#9a7a20" stroke-width="0.5"/><path d="M11 98 L12 96.3 L13 99Z" fill="#333"/>
<path d="M2.5 126 L8 116 L6.5 122 L11.5 119" fill="none" stroke="#000" stroke-width="0.9"/>
<path d="M11 120 L15.5 112.5 L17.5 114 L13 121Z" fill="#7090e0" stroke="#2a3f80" stroke-width="0.5"/><path d="M11 120 L12 118.3 L13 121Z" fill="#333"/>
<line x1="-1" y1="132" x2="20" y2="132" stroke="#b5b4b0"/>
<path d="M3 149 L6 142 L10 144 L14 138" fill="none" stroke="#000"/>
<g fill="#fff" stroke="#000" stroke-width="0.8"><rect x="1.5" y="147.5" width="3" height="3"/><rect x="5" y="140" width="3" height="3"/><rect x="8.5" y="143" width="3" height="3"/><rect x="13.5" y="136.5" width="3" height="3"/></g>
</svg>
<div class="a" style="left:1229px;top:276px;width:14px;height:14px;background:linear-gradient(90deg,#3a3a3a,#f0f0f0)"></div>
<svg style="left:1229px;top:276px" width="14" height="14" viewBox="0 0 14 14"><line x1="1" y1="7" x2="13" y2="7" stroke="#000"/><rect x="0.5" y="5.5" width="2" height="3" fill="#fff" stroke="#000" stroke-width="0.7"/><rect x="11.5" y="5.5" width="2" height="3" fill="#fff" stroke="#000" stroke-width="0.7"/></svg>
<svg style="left:1228px;top:298px" width="15" height="15" viewBox="0 0 15 15"><path d="M1 14 L2 11 L9 4 L11 6 L4 13Z" fill="#fff" stroke="#000"/><path d="M9 2 L11 0.5 L14.5 4 L13 6 L12 7 L8 3Z" fill="#1a2f8a"/></svg>
<!-- tag browser toolbar -->
<svg style="left:0;top:0" width="300" height="360" viewBox="0 0 300 360">
<defs>
<linearGradient id="bino" x1="0" y1="0" x2="1" y2="0"><stop offset="0" stop-color="#3a3a3a"/><stop offset="0.5" stop-color="#9a9a9a"/><stop offset="1" stop-color="#3a3a3a"/></linearGradient>
<radialGradient id="lens" cx="0.5" cy="0.4" r="0.6"><stop offset="0" stop-color="#9cd4ff"/><stop offset="1" stop-color="#1a5a9a"/></radialGradient>
<linearGradient id="blu" x1="0" y1="0" x2="1" y2="1"><stop offset="0" stop-color="#4aa8f0"/><stop offset="1" stop-color="#0e5ab0"/></linearGradient>
</defs>
<path d="M16 334 Q16 329 19 329 L21 329 L22 333 L24 333 L25 329 L27 329 Q30 329 30 334 L31 339 L15 339Z" fill="url(#bino)"/>
<circle cx="19" cy="339" r="3.6" fill="#333"/><circle cx="27" cy="339" r="3.6" fill="#333"/>
<circle cx="19" cy="339" r="2.4" fill="url(#lens)"/><circle cx="27" cy="339" r="2.4" fill="url(#lens)"/>
<path d="M38 333 Q40 328 46 328 L50 330 L53 334 L52 339 L47 343 L42 342 L39 338Z" fill="url(#blu)" stroke="#0a4a90" stroke-width="0.6"/>
<path d="M41 334 L46 331 L47 334 L43 336Z" fill="#0a3a80"/><ellipse cx="47.5" cy="338" rx="2" ry="1.2" fill="#fff"/>
<g stroke="#5a7aa0" stroke-width="0.8" fill="#fff"><rect x="59.5" y="328.5" width="5" height="5"/><rect x="64.5" y="328.5" width="5" height="5"/><rect x="69.5" y="328.5" width="5" height="5"/><rect x="59.5" y="333.5" width="5" height="5"/><rect x="64.5" y="333.5" width="5" height="5"/><rect x="69.5" y="333.5" width="5" height="5"/><rect x="59.5" y="338.5" width="5" height="5"/><rect x="64.5" y="338.5" width="5" height="5"/><rect x="69.5" y="338.5" width="5" height="5"/></g>
<g fill="#8ec0ee"><rect x="65.5" y="329.5" width="3" height="3"/><rect x="65.5" y="334.5" width="3" height="3"/><rect x="70.5" y="334.5" width="3" height="3"/></g>
<path d="M66 339 L68.5 342 L74 335" stroke="#1a6ac8" stroke-width="1.6" fill="none"/>
<path d="M89.5 335 L95.5 335 L92.5 338Z" fill="#000"/>
<rect x="106" y="332" width="1" height="8" fill="#b8b7b3"/>
<path d="M120.5 329.5 L126 329.5 L133 336.5 L127 343 L120.5 336.5Z" fill="#f6f8fa" stroke="#a8b4c0" stroke-width="0.8"/>
<circle cx="123" cy="332" r="1" fill="#9aa8b8"/>
<path d="M125 333 L130.5 336.5 L126.5 340.5 L123 338Z" fill="#8ec0ee" opacity="0.85"/>
<circle cx="122.5" cy="341" r="4" fill="#2a9a3a" stroke="#1a7a2a" stroke-width="0.5"/><path d="M120 341 L125 341 M122.5 338.5 L122.5 343.5" stroke="#fff" stroke-width="1"/>
<path d="M149 335 L155 335 L152 338Z" fill="#000"/>
<g fill="#a0a0a0"><path d="M162 330 L168 330 L176 337 L170 343 L162 336Z"/><rect x="183" y="328" width="16" height="7"/></g>
<g fill="#c8c8c8"><rect x="185" y="330" width="3" height="1"/><rect x="190" y="331" width="1" height="3"/><rect x="194" y="331" width="1" height="3"/></g>
<text x="191" y="343.5" font-size="6.5" font-weight="bold" text-anchor="middle" fill="#9a9a9a" font-family="Liberation Mono">OPC</text>
<circle cx="213" cy="337" r="5.8" fill="#a2a2a2"/><rect x="211" y="329" width="4" height="2" fill="#a2a2a2"/><line x1="213" y1="337" x2="216" y2="333" stroke="#c8c8c8" stroke-width="0.8"/>
<rect x="231" y="332" width="1" height="8" fill="#b8b7b3"/>
<g fill="#a0a0a0"><path d="M244 337 L252 335 L258 338 L258 342 L250 344 L244 342Z"/><path d="M249 335 L249 332 L247 332 L252 328 L256 332 L254 332 L254 336Z"/>
<path d="M266 337 L274 335 L280 338 L280 342 L272 344 L266 342Z"/><path d="M271 328 L276 328 L276 332 L278 332 L273.5 337 L269 332 L271 332Z"/></g>
</svg>
<!-- property editor toolbar -->
<svg style="left:0;top:0" width="230" height="560" viewBox="0 0 230 560">
<rect x="9.5" y="532.5" width="21" height="21" fill="#fdf3e2" stroke="#000" stroke-width="1.4"/>
<g fill="#c4c4c4" stroke="#808080" stroke-width="0.8"><rect x="13.5" y="535.5" width="6" height="6"/><rect x="13.5" y="544.5" width="6" height="6"/></g>
<g fill="#fff"><rect x="14.5" y="545.5" width="4" height="4"/></g>
<path d="M14.5 538.5 L18.5 538.5 M16.5 536.5 L16.5 540.5 M14.5 547.5 L18.5 547.5 M16.5 545.5 L16.5 549.5 M16.5 541.5 L16.5 544.5" stroke="#000" stroke-width="1"/>
<g fill="#000"><rect x="21" y="537" width="4" height="1"/><rect x="21" y="546" width="4" height="1"/></g>
<g fill="#a8a8a8"><rect x="21" y="539" width="2" height="1"/><rect x="24" y="539" width="3" height="1"/><rect x="21" y="541" width="2" height="1"/><rect x="24" y="541" width="3" height="1"/><rect x="21" y="543" width="2" height="1"/><rect x="24" y="543" width="3" height="1"/><rect x="21" y="548" width="2" height="1"/><rect x="24" y="548" width="3" height="1"/></g>
<text x="38" y="541.5" font-size="8" font-weight="bold" text-anchor="middle" fill="#000" font-family="Liberation Serif">A</text>
<text x="38" y="550" font-size="8" font-weight="bold" text-anchor="middle" fill="#000" font-family="Liberation Mono">Z</text>
<path d="M45.5 535 L45.5 536 M45.5 537.5 L45.5 546" stroke="#1a2a9a" stroke-width="1"/><path d="M43 545 L48 545 L45.5 550Z" fill="#1a2a9a"/>
<rect x="60" y="539" width="1" height="8" fill="#b8b7b3"/>
<rect x="74.5" y="541.5" width="11" height="6" fill="#fff" stroke="#000" stroke-width="1.2"/>
<g fill="#000"><rect x="76.5" y="543" width="1.5" height="1"/><rect x="76.5" y="545" width="1.5" height="1"/></g><g fill="#2a3ab0"><rect x="79" y="543" width="5" height="1"/><rect x="79" y="545" width="5" height="1"/></g>
<rect x="98" y="539" width="1" height="8" fill="#b8b7b3"/>
<g fill="#c0c0c0" stroke="#888" stroke-width="0.8"><rect x="111.5" y="538.5" width="6" height="6"/><rect x="133.5" y="538.5" width="6" height="6"/></g>
<path d="M112.5 541.5 L116.5 541.5 M114.5 539.5 L114.5 543.5 M117.5 541.5 L119.5 541.5 M134.5 541.5 L138.5 541.5 M139.5 541.5 L141.5 541.5 M136.5 544.5 L136.5 548.5 L142 548.5" stroke="#000" stroke-width="1" fill="none"/>
<g fill="#1a2a9a"><path d="M121 540 L126 540 L123.5 535Z"/><path d="M121 546 L126 546 L123.5 551Z"/><rect x="123" y="542" width="1" height="1"/><rect x="123" y="544" width="1" height="1"/>
<path d="M143 536 L148 536 L145.5 541Z"/><path d="M143 550 L148 550 L145.5 545Z"/><rect x="145" y="542" width="1" height="1"/></g>
<rect x="158" y="540" width="1" height="8" fill="#b8b7b3"/>
<defs><linearGradient id="fun" x1="0" y1="0" x2="1" y2="0"><stop offset="0" stop-color="#808080"/><stop offset="0.4" stop-color="#f4f4f4"/><stop offset="1" stop-color="#707070"/></linearGradient></defs>
<path d="M170.5 537 Q177 533 183.5 537 L178.5 543 L178.5 549 L175.5 549 L175.5 543Z" fill="url(#fun)" stroke="#6a6a6a" stroke-width="0.5"/>
<ellipse cx="177" cy="537" rx="6.3" ry="1.8" fill="#d8d8d8" stroke="#707070" stroke-width="0.5"/>
<text x="183" y="550.5" font-size="8.5" text-anchor="middle" fill="#000" font-family="Liberation Sans">A</text>
<path d="M208 542 L214 542 L211 545Z" fill="#000"/>
</svg>
<!-- palette toolbar -->
<svg style="left:1000px;top:100px" width="100" height="28" viewBox="0 0 100 28">
<path d="M8 10.5 Q9 5.5 14.3 5.5 Q19.5 5.5 20.5 10.5Z" fill="#10c010" stroke="#000" stroke-width="0.6"/>
<line x1="14.3" y1="10.5" x2="14.3" y2="18.5" stroke="#000" stroke-width="1.1"/>
<path d="M7.5 15.5 L14.3 19 L7.5 22 Z M21 15.5 L14.3 19 L21 22Z" fill="#fff" stroke="#000" stroke-width="1.1"/>
<rect x="32" y="11" width="1" height="8" fill="#b8b7b3"/>
<g fill="#c0c0c0" stroke="#888" stroke-width="0.8"><rect x="45.5" y="9.5" width="6" height="6"/><rect x="67.5" y="9.5" width="6" height="6"/></g>
<path d="M46.5 12.5 L50.5 12.5 M48.5 10.5 L48.5 14.5 M51.5 12.5 L53.5 12.5 M68.5 12.5 L72.5 12.5 M73.5 12.5 L75.5 12.5 M70.5 15.5 L70.5 19.5 L76 19.5" stroke="#000" stroke-width="1" fill="none"/>
<g fill="#1a2a9a"><path d="M55 11 L60 11 L57.5 6Z"/><path d="M55 17 L60 17 L57.5 22Z"/><rect x="57" y="13" width="1" height="1"/><rect x="57" y="15" width="1" height="1"/>
<path d="M77 7 L82 7 L79.5 12Z"/><path d="M77 21 L82 21 L79.5 16Z"/><rect x="79" y="13" width="1" height="1"/></g>
<rect x="92" y="11" width="1" height="8" fill="#b8b7b3"/>
</svg>
<svg style="left:1105px;top:107px" width="20" height="14" viewBox="0 0 20 14"><circle cx="5.5" cy="5.5" r="4" fill="none" stroke="#a8a8a8" stroke-width="1.6"/><line x1="8.5" y1="8.5" x2="12" y2="12.5" stroke="#a8a8a8" stroke-width="2"/><path d="M13 6 L17 6 L15 8.5Z" fill="#a8a8a8"/></svg>
<div class="vdots" style="left:318px;top:372px;height:34px"></div>
<div class="vdots" style="left:997px;top:372px;height:34px"></div>
<!-- header icons -->
<svg style="left:255px;top:86px" width="50" height="10" viewBox="0 0 50 10" shape-rendering="crispEdges">
<path d="M0 3 L8 3 L8 9 L0 9Z M1 5 L1 8 L7 8 L7 5Z" fill="#000" fill-rule="evenodd"/>
<path d="M3 0 L10 0 L10 6 L9 6 L9 1 L3 1Z" fill="#000"/>
<path d="M23 0 L28 0 L28 6 L29 6 L29 7 L26 7 L26 10 L25 10 L25 7 L22 7 L22 6 L23 6Z M24 2 L24 6 L27 6 L27 2Z" fill="#000" fill-rule="evenodd"/>
</svg>
<svg style="left:296px;top:86px" width="8" height="8" viewBox="0 0 8 8"><path d="M0.5 0.5 L7.5 7.5 M7.5 0.5 L0.5 7.5" stroke="#000" stroke-width="0.9"/></svg>
<svg style="left:255px;top:308px" width="50" height="10" viewBox="0 0 50 10" shape-rendering="crispEdges">
<path d="M0 3 L8 3 L8 9 L0 9Z M1 5 L1 8 L7 8 L7 5Z" fill="#000" fill-rule="evenodd"/>
<path d="M3 0 L10 0 L10 6 L9 6 L9 1 L3 1Z" fill="#000"/>
<path d="M23 0 L28 0 L28 6 L29 6 L29 7 L26 7 L26 10 L25 10 L25 7 L22 7 L22 6 L23 6Z M24 2 L24 6 L27 6 L27 2Z" fill="#000" fill-rule="evenodd"/>
</svg>
<svg style="left:296px;top:308px" width="8" height="8" viewBox="0 0 8 8"><path d="M0.5 0.5 L7.5 7.5 M7.5 0.5 L0.5 7.5" stroke="#000" stroke-width="0.9"/></svg>
<svg style="left:255px;top:517px" width="50" height="10" viewBox="0 0 50 10" shape-rendering="crispEdges">
<path d="M0 3 L8 3 L8 9 L0 9Z M1 5 L1 8 L7 8 L7 5Z" fill="#000" fill-rule="evenodd"/>
<path d="M3 0 L10 0 L10 6 L9 6 L9 1 L3 1Z" fill="#000"/>
<path d="M23 0 L28 0 L28 6 L29 6 L29 7 L26 7 L26 10 L25 10 L25 7 L22 7 L22 6 L23 6Z M24 2 L24 6 L27 6 L27 2Z" fill="#000" fill-rule="evenodd"/>
</svg>
<svg style="left:296px;top:517px" width="8" height="8" viewBox="0 0 8 8"><path d="M0.5 0.5 L7.5 7.5 M7.5 0.5 L0.5 7.5" stroke="#000" stroke-width="0.9"/></svg>
<svg style="left:1159px;top:86px" width="50" height="10" viewBox="0 0 50 10" shape-rendering="crispEdges">
<path d="M0 3 L8 3 L8 9 L0 9Z M1 5 L1 8 L7 8 L7 5Z" fill="#000" fill-rule="evenodd"/>
<path d="M3 0 L10 0 L10 6 L9 6 L9 1 L3 1Z" fill="#000"/>
<path d="M23 0 L28 0 L28 6 L29 6 L29 7 L26 7 L26 10 L25 10 L25 7 L22 7 L22 6 L23 6Z M24 2 L24 6 L27 6 L27 2Z" fill="#000" fill-rule="evenodd"/>
</svg>
<svg style="left:1200px;top:86px" width="8" height="8" viewBox="0 0 8 8"><path d="M0.5 0.5 L7.5 7.5 M7.5 0.5 L0.5 7.5" stroke="#000" stroke-width="0.9"/></svg>
<!-- status bar -->
<div class="a" style="left:8px;top:704px;width:1240px;height:1px;background:#8e8d89"></div>
<div class="a" style="left:8px;top:705px;width:1240px;height:1px;background:#fff"></div>
<div class="sep" style="left:1092px;top:707px;height:21px;background:#9b9a96"></div>
<div class="sep" style="left:1121px;top:707px;height:21px;background:#9b9a96"></div>
<div class="sep" style="left:1150px;top:707px;height:21px;background:#9b9a96"></div>
<div class="sep" style="left:1226px;top:707px;height:21px;background:#9b9a96"></div>
<div class="t" style="left:1097px;top:712px">(-,-)</div>
<div class="t" style="left:1125px;top:712px">--%</div>
<div class="t" style="left:1155px;top:712px">69 / 455 mb</div>
<svg style="left:1231px;top:710px" width="16" height="17" viewBox="0 0 16 17"><defs><linearGradient id="cyl2" x1="0" y1="0" x2="1" y2="0"><stop offset="0" stop-color="#5a6e88"/><stop offset="0.3" stop-color="#9ec8ec"/><stop offset="0.55" stop-color="#3c86c8"/><stop offset="0.7" stop-color="#4a5a78"/><stop offset="1" stop-color="#2a3a56"/></linearGradient></defs>
<path d="M1 3 Q6.5 0 12 3 L12 14 Q6.5 17 1 14Z" fill="url(#cyl2)"/><ellipse cx="6.5" cy="3" rx="5.5" ry="1.8" fill="#c9d8e8" stroke="#7a8aa0" stroke-width="0.5"/>
<g stroke="#d0e8f8" stroke-width="0.7"><line x1="2.5" y1="6" x2="6" y2="6"/><line x1="2.5" y1="8" x2="6" y2="8"/><line x1="2.5" y1="10" x2="6" y2="10"/></g>
<circle cx="10.5" cy="12" r="4.3" fill="#2a9a2a" stroke="#1a7a1a" stroke-width="0.5"/><path d="M8.3 12 L10 13.8 L12.8 10.2" stroke="#fff" stroke-width="1.4" fill="none"/></svg>
<div class="a" style="left:12px;top:711px;width:6px;height:6px;background:#6b6e70"></div>
<div class="a" style="left:20px;top:711px;width:6px;height:6px;background:#6b6e70"></div>
<div class="a" style="left:12px;top:719px;width:6px;height:6px;background:#6b6e70"></div>
<div class="a" style="left:20px;top:719px;width:6px;height:6px;background:#6b6e70"></div>
</body></html>
